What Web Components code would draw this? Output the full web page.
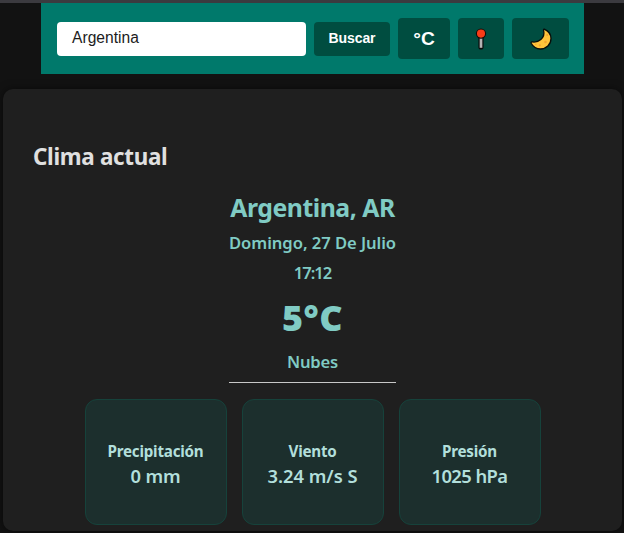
<!DOCTYPE html>
<html lang="es">
<head>
<meta charset="utf-8">
<title>Clima</title>
<style>
html,body{margin:0;height:100%;background:#121212;overflow:hidden}
</style>
</head>
<body>
<weather-app></weather-app>
<script>
// One line of text whose tracking adapts to the width given in its "width" attribute.
class FitText extends HTMLElement{
  connectedCallback(){
    const r=this.attachShadow({mode:'open'});
    r.innerHTML='<style>:host{display:block;white-space:nowrap}span{display:inline-block}</style><span><slot></slot></span>';
    const w=parseFloat(this.getAttribute('width'));
    const s=r.querySelector('span');
    const now=s.getBoundingClientRect().width;
    const n=this.textContent.length;
    if(w&&now){const ls=(w-now)/n;s.style.letterSpacing=ls.toFixed(3)+'px';}
  }
}
class HeaderButton extends HTMLElement{
  connectedCallback(){
    this.attachShadow({mode:'open'}).innerHTML=`<style>
    :host{display:block;flex:none;width:52px;height:41px}
    :host([kind=search]){width:76px;height:34px}
    :host([kind=pin]){width:46px}
    :host([kind=theme]){width:57px}
    button{box-sizing:border-box;width:100%;height:100%;display:flex;align-items:center;justify-content:center;margin:0;padding:0;border:0;border-radius:4px;background:#004d40;color:#fff;font:bold 19.2px "Liberation Sans",Arial,sans-serif}
    :host([kind=search]) button{font-size:14px;padding-bottom:1px}
    </style><button><slot></slot></button>`;
  }
}
class SearchBar extends HTMLElement{
  connectedCallback(){
    this.attachShadow({mode:'open'}).innerHTML=`<style>
    :host{display:flex;box-sizing:border-box;width:543px;height:71px;margin:0 0 0 41px;padding:0 15px 0 16px;align-items:center;gap:8px;background:#00796b}
    .field{box-sizing:border-box;flex:none;width:249px;height:34px;padding:0 15px;border-radius:4px;background:#fff;color:#1c1c1c;font:15.6px/32px "Liberation Sans",Arial,sans-serif}
    svg{display:block}
    </style>
    <div class="field"><fit-text width="67">Argentina</fit-text></div>
    <header-button kind="search"><fit-text width="47">Buscar</fit-text></header-button>
    <header-button><fit-text width="21.5">°C</fit-text></header-button>
    <header-button kind="pin"><svg width="12" height="22" viewBox="0 0 12 22"><path d="M6 7v12" stroke="#0a0d0c" stroke-width="5.2" stroke-linecap="round"/><path d="M6 8v11.8" stroke="#b5b4b5" stroke-width="2.7"/><circle cx="6" cy="5.6" r="4.6" fill="#f93c17" stroke="#100b08" stroke-width="1.1"/></svg></header-button>
    <header-button kind="theme"><svg width="22" height="22" viewBox="0 0 22 22"><path d="M14.3 1.2C18.2 3 21 6.4 21 10.6C21 16.7 16.2 21 10.5 21C6.5 21 2.9 18.4 1.2 15.2C.9 14.4 1.4 13.8 2.2 13.9C8.2 14.8 15.5 10.2 13.6 2.3C13.4 1.4 13.6.9 14.3 1.2Z" fill="#ffc43b" stroke="#080d0a" stroke-width="1.3" stroke-linejoin="round"/><g fill="#f4a52e"><circle cx="17.2" cy="7" r="1"/><circle cx="15.5" cy="14" r="1.3"/><circle cx="9.8" cy="17.3" r="1.1"/><circle cx="5.8" cy="16.3" r=".8"/></g></svg></header-button>`;
  }
}
class MetricCard extends HTMLElement{
  connectedCallback(){
    this.attachShadow({mode:'open'}).innerHTML=`<style>
    :host{display:flex;flex-direction:column;align-items:center;box-sizing:border-box;width:142px;height:126px;padding-top:38px;border:1px solid #16423b;border-radius:12px;background:#1c2f2d;color:#b2dfdb}
    .label{font-size:15.2px;font-weight:700;line-height:26px}
    .value{font-size:18.4px;font-weight:600;line-height:24px}
    </style><div class="label"><slot name="label"></slot></div><div class="value"><slot></slot></div>`;
  }
}
class CurrentWeather extends HTMLElement{
  connectedCallback(){
    this.attachShadow({mode:'open'}).innerHTML=`<style>
    :host{display:block;box-sizing:border-box;width:619px;height:442px;margin:15px 0 0 3px;padding:51px 30px 0;border-radius:10px;background:#1f1f1f;box-shadow:0 0 8px rgba(0,0,0,.5);font-family:"Noto Sans","Open Sans",sans-serif;color:#e0e0e0}
    h2{margin:0;font-size:22.4px;line-height:34px;font-weight:700}
    .now{display:flex;flex-direction:column;align-items:center;box-sizing:border-box;width:167px;height:209px;margin:0 auto;padding-top:15px;border-bottom:1px solid #c8c8c8;color:#80cbc4;font-weight:600;font-size:16.6px;line-height:30px}
    .place{font-size:24.8px;font-weight:700;line-height:37px;height:39px}
    .temp{font-size:36px;font-weight:900;line-height:60px;height:59px}
    .cards{display:flex;justify-content:center;gap:15px;margin-top:16px;}
    </style>
    <h2><fit-text width="134.5">Clima actual</fit-text></h2>
    <div class="now">
      <fit-text class="place" width="164.5">Argentina, AR</fit-text>
      <fit-text width="167">Domingo, 27 De Julio</fit-text>
      <fit-text width="37.5">17:12</fit-text>
      <fit-text class="temp" width="61">5°C</fit-text>
      <fit-text width="51">Nubes</fit-text>
    </div>
    <div class="cards">
      <metric-card><fit-text slot="label" width="96">Precipitación</fit-text><fit-text width="50">0 mm</fit-text></metric-card>
      <metric-card><fit-text slot="label" width="48">Viento</fit-text><fit-text width="90">3.24 m/s S</fit-text></metric-card>
      <metric-card><fit-text slot="label" width="55">Presión</fit-text><fit-text width="76">1025 hPa</fit-text></metric-card>
    </div>`;
  }
}
class WeatherApp extends HTMLElement{
  connectedCallback(){
    this.attachShadow({mode:'open'}).innerHTML=`<style>
    :host{display:block;box-sizing:border-box;height:533px;border-top:3px solid #3b3a3f;background:#121212}
    </style><search-bar></search-bar><current-weather></current-weather>`;
  }
}
customElements.define('header-button',HeaderButton);
customElements.define('search-bar',SearchBar);
customElements.define('metric-card',MetricCard);
customElements.define('current-weather',CurrentWeather);
customElements.define('weather-app',WeatherApp);
customElements.define('fit-text',FitText);
</script>
</body>
</html>
